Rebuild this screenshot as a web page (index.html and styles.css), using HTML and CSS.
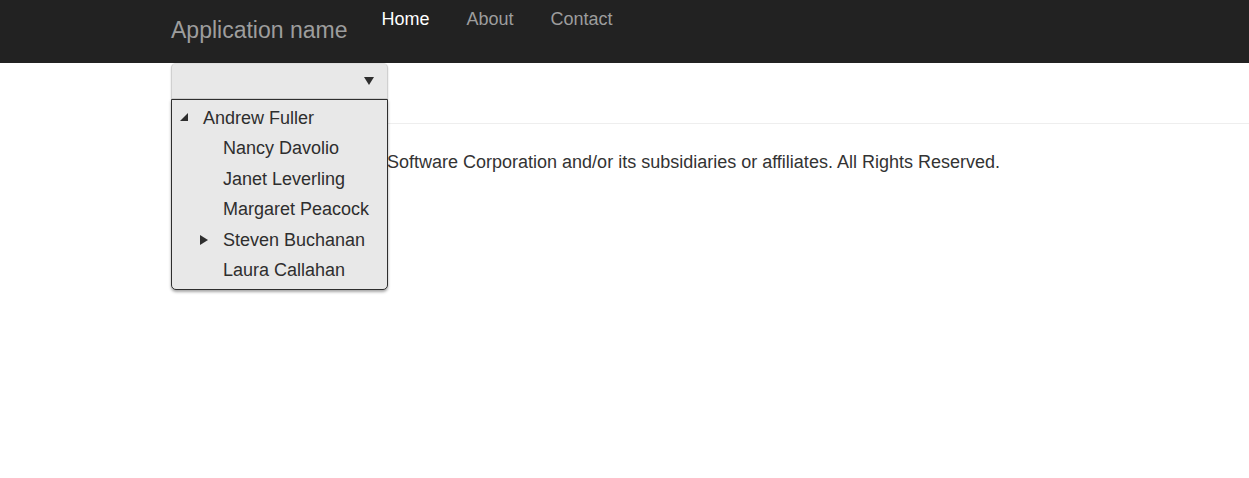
FILE: index.html
```
<!DOCTYPE html>
<html lang="en">
<head>
<meta charset="utf-8">
<title>Application name</title>
<link rel="stylesheet" href="styles.css">
</head>
<body>
<header class="navbar">
  <a class="brand" href="#">Application name</a>
  <nav class="nav">
    <a class="nav-link active" href="#">Home</a>
    <a class="nav-link" href="#">About</a>
    <a class="nav-link" href="#">Contact</a>
  </nav>
</header>
<main class="content">
  <div class="dropdown">
    <button class="dropdown-toggle" type="button" aria-label="Select employee" aria-expanded="true">
      <svg class="caret" viewBox="0 0 10 8" aria-hidden="true"><path d="M0 0h10L5 8z"/></svg>
    </button>
    <ul class="tree" role="tree">
      <li class="node root" role="treeitem" aria-expanded="true">
        <svg class="arrow" viewBox="0 0 8 10" aria-hidden="true"><path d="M8 0v8H0z"/></svg>Andrew Fuller</li>
      <li class="node" role="treeitem">Nancy Davolio</li>
      <li class="node" role="treeitem">Janet Leverling</li>
      <li class="node" role="treeitem">Margaret Peacock</li>
      <li class="node" role="treeitem" aria-expanded="false">
        <svg class="arrow" viewBox="0 0 8 10" aria-hidden="true"><path d="M0 0l8 5-8 5z"/></svg>Steven Buchanan</li>
      <li class="node" role="treeitem">Laura Callahan</li>
    </ul>
  </div>
  <footer class="footer">
    <p class="copyright">Software Corporation and/or its subsidiaries or affiliates. All Rights Reserved.</p>
  </footer>
</main>
</body>
</html>
```
FILE: styles.css
```
* {
  box-sizing: border-box;
}

body {
  min-height: 100vh;
  margin: 0;
  background: #fff;
  color: #333;
  font-family: "Liberation Sans", Arial, sans-serif;
  font-size: 18px;
  line-height: 25px;
}

.navbar {
  display: flex;
  align-items: flex-start;
  gap: 34px;
  min-height: 63px;
  padding-left: 171px;
  background: #222;
}

.brand {
  padding: 18px 0;
  color: #9d9d9d;
  font-size: 23px;
  text-decoration: none;
}

.nav {
  display: flex;
  gap: 37px;
  padding-top: 7px;
}

.nav-link {
  color: #9d9d9d;
  text-decoration: none;
}

.nav-link.active {
  color: #fff;
}

.content {
  padding-left: 171px;
}

.dropdown {
  position: relative;
  width: 217px;
}

.dropdown-toggle {
  display: flex;
  align-items: center;
  justify-content: flex-end;
  width: 100%;
  height: 36px;
  padding: 0 13px;
  background: #e8e8e8;
  border: 1px solid #d0d0d0;
  border-top-color: #e0e0e0;
  border-radius: 5px 5px 0 0;
  box-shadow: 0 1px 2px rgba(0, 0, 0, 0.2);
}

.caret {
  width: 10px;
  height: 8px;
  fill: #2e2e2e;
}

.tree {
  position: absolute;
  top: 100%;
  left: 0;
  display: grid;
  grid-auto-rows: 1fr;
  width: 100%;
  min-height: 191px;
  margin: 0;
  padding: 3px 0;
  list-style: none;
  background: #e8e8e8;
  border: 1px solid #2e2e2e;
  border-radius: 0 0 5px 5px;
  box-shadow: 0 2px 3px rgba(0, 0, 0, 0.35);
}

.node {
  display: flex;
  align-items: center;
  padding-left: 51px;
  color: #2e2e2e;
  white-space: nowrap;
}

.root {
  padding-left: 31px;
}

.arrow {
  width: 8px;
  height: 10px;
  margin-left: -23px;
  margin-right: 15px;
  fill: #2e2e2e;
}

.footer {
  margin-top: 24px;
  padding: 26px 0;
  border-top: 1px solid #eee;
}

.copyright {
  margin: 0;
  padding-left: 216px;
}
```
